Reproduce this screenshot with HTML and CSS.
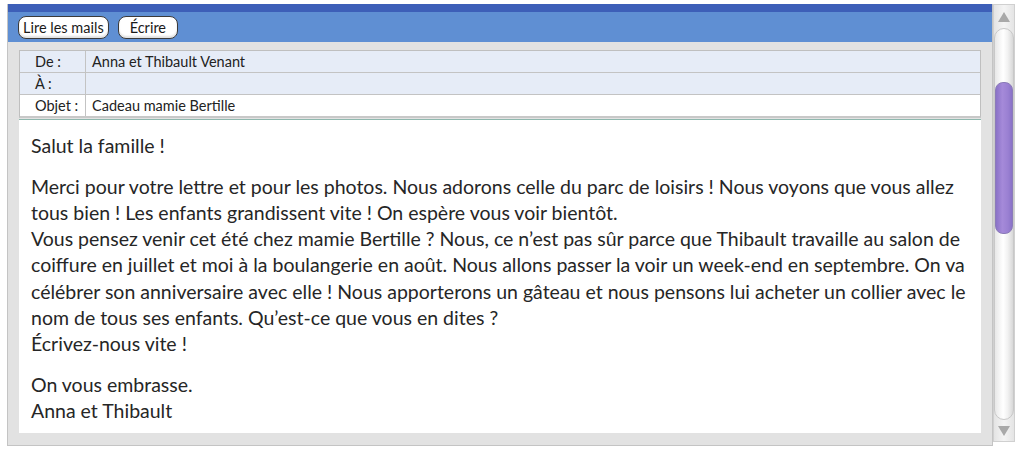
FILE: index.html
```html
<!DOCTYPE html>
<html lang="fr">
<head>
<meta charset="utf-8">
<link rel="stylesheet" href="styles.css">
</head>
<body>
<div class="window">
  <div class="panel">
    <div class="toolbar">
      <span class="btn">Lire les mails</span>
      <span class="btn">Écrire</span>
    </div>
    <div class="content">
      <div class="header">
        <div class="row blue"><div class="label">De :</div><div class="value">Anna et Thibault Venant</div></div>
        <div class="row blue"><div class="label">À :</div><div class="value"></div></div>
        <div class="row"><div class="label">Objet :</div><div class="value">Cadeau mamie Bertille</div></div>
      </div>
      <div class="message">
        <p>Salut la famille !</p>
        <p>Merci pour votre lettre et pour les photos. Nous adorons celle du parc de loisirs ! Nous voyons que vous allez<br>tous bien ! Les enfants grandissent vite ! On espère vous voir bientôt.<br>Vous pensez venir cet été chez mamie Bertille ? Nous, ce n’est pas sûr parce que Thibault travaille au salon de<br>coiffure en juillet et moi à la boulangerie en août. Nous allons passer la voir un week-end en septembre. On va<br>célébrer son anniversaire avec elle ! Nous apporterons un gâteau et nous pensons lui acheter un collier avec le<br>nom de tous ses enfants. Qu’est-ce que vous en dites ?<br>Écrivez-nous vite !</p>
        <p>On vous embrasse.<br>Anna et Thibault</p>
      </div>
    </div>
  </div>
  <div class="scroll">
    <div class="arrow up"></div>
    <div class="track"><div class="thumb"></div></div>
    <div class="arrow down"></div>
  </div>
</div>
</body>
</html>
```

FILE: styles.css
```css
html, body {
  margin: 0;
  padding: 0;
  background: #ffffff;
}
body {
  font-family: Lato, "Liberation Sans", sans-serif;
  color: #222;
}
.window {
  display: flex;
  margin: 4px 0 0 7px;
  width: 1012px;
}
.panel {
  width: 986px;
  height: 442px;
  box-sizing: border-box;
  border: 1px solid #c4c4c4;
  border-top: none;
  background: #e2e2e2;
  display: flex;
  flex-direction: column;
}
.toolbar {
  flex-shrink: 0;
  height: 30px;
  border-top: 8px solid #3d5fb8;
  background: #5f8fd3;
  display: flex;
  align-items: center;
  gap: 9px;
  padding-left: 10px;
}
.btn {
  display: inline-flex;
  align-items: center;
  box-sizing: border-box;
  height: 23px;
  padding: 0 4px;
  background: #fff;
  border: 1px solid #3a3a3a;
  border-radius: 8px;
  font-size: 14.5px;
  color: #1a1a1a;
  box-shadow: inset 0 -2px 2px rgba(0,0,0,0.12);
}
.btn + .btn {
  padding: 0 11px;
}
.content {
  flex: 1;
  min-height: 0;
  display: flex;
  flex-direction: column;
  padding: 8px 11px 12px 11px;
}
.header {
  flex-shrink: 0;
  border: 1px solid #bfbfbf;
  border-bottom: 2px solid #c8c8c8;
}
.row {
  display: flex;
  height: 21px;
  background: #fff;
  font-size: 14.5px;
  line-height: 21px;
}
.row + .row {
  border-top: 1px solid #c3c3c3;
}
.row.blue {
  background: #e6ecf7;
}
.label {
  width: 50px;
  padding-left: 15px;
  border-right: 1px solid #c3c3c3;
}
.value {
  flex: 1;
  padding-left: 6px;
}
.message {
  flex: 1;
  min-height: 0;
  overflow: hidden;
  margin-top: 1px;
  border-top: 1px solid #8fb8ae;
  background: #fff;
  padding: 13px 12px 0 12px;
  font-size: 19.5px;
  line-height: 26.2px;
  color: #262626;
}
.message p {
  margin: 0 0 14.5px 0;
}
.scroll {
  width: 22px;
  height: 438px;
  box-sizing: border-box;
  border: 1px solid #d0d0d0;
  background: linear-gradient(to right, #e4e4e4, #f4f4f4 50%, #e4e4e4);
  display: flex;
  flex-direction: column;
  align-items: center;
}
.arrow {
  width: 0;
  height: 0;
  border-left: 6px solid transparent;
  border-right: 6px solid transparent;
}
.arrow.up {
  margin: 7px 0 6px;
  border-bottom: 10px solid #a9a9a9;
}
.arrow.down {
  margin: 6px 0 5px;
  border-top: 10px solid #a9a9a9;
}
.track {
  flex: 1;
  width: 20px;
  box-sizing: border-box;
  border: 1px solid #c8c8c8;
  border-radius: 10px;
  background: linear-gradient(to right, #e8e8e8, #ffffff 45%, #f2f2f2 70%, #d8d8d8);
  padding-top: 53px;
  display: flex;
  justify-content: center;
}
.thumb {
  width: 16px;
  height: 150px;
  border-radius: 8px;
  background: linear-gradient(to right, #8a72c7, #a58ad9 40%, #9a80d2 75%, #8a72c7);
  border: 1px solid #8b7bb8;
}
```
